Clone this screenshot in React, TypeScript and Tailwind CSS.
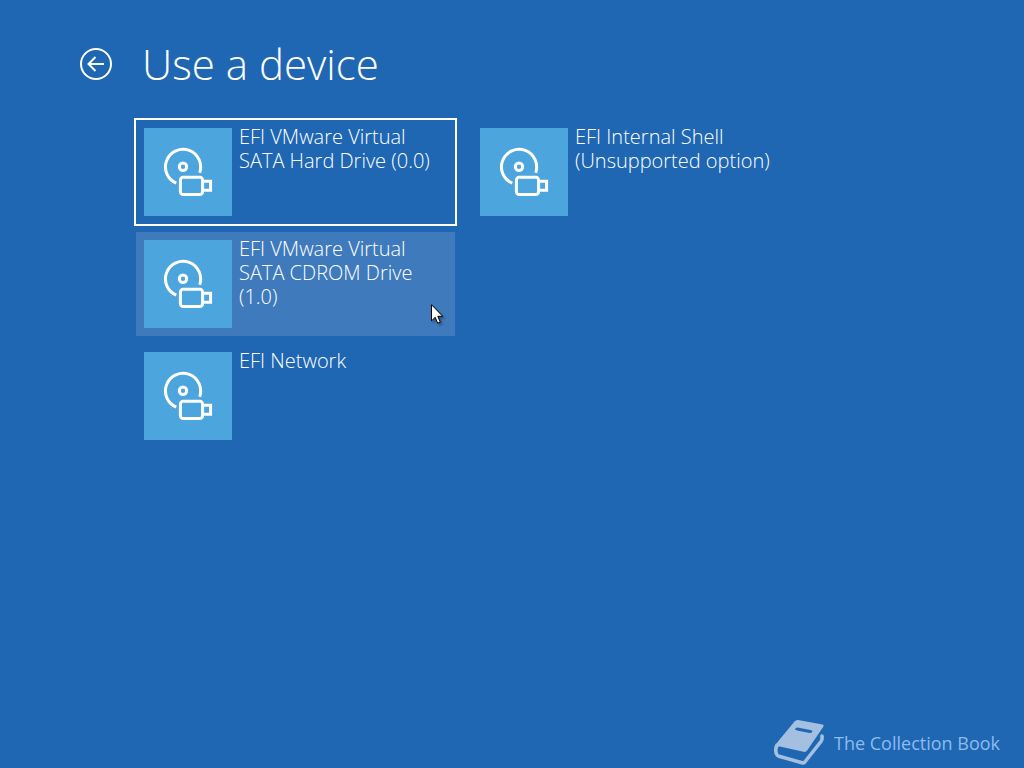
interface Device {
    name: string;
    state?: "focused" | "hovered";
}

const devices: Device[] = [
    { name: "EFI VMware Virtual SATA Hard Drive (0.0)", state: "focused" },
    { name: "EFI VMware Virtual SATA CDROM Drive (1.0)", state: "hovered" },
    { name: "EFI Network" },
    { name: "EFI Internal Shell (Unsupported option)" },
];

const stateClasses = {
    focused: "outline-2 outline-white",
    hovered: "bg-[#3f7bbc]",
};

function DeviceIcon() {
    return (
        <svg viewBox="0 0 88 88" className="size-22 shrink-0 bg-[#4ca5dc]" fill="none" stroke="white" strokeWidth="3" aria-hidden="true">
            <path d="M32.3 55.2A17.6 17.6 0 1 1 55.7 44.7" />
            <circle cx="39" cy="38.8" r="3.7" />
            <rect x="36.4" y="49.2" width="22.2" height="17.4" rx="2.8" />
            <path d="M59 53.3h7.6v9H59" />
        </svg>
    );
}

function Cursor() {
    return (
        <svg viewBox="0 0 12 20" className="absolute top-18 left-[295px] h-5 w-3 overflow-visible drop-shadow-[2px_2px_1px_rgba(0,0,0,0.3)]" aria-hidden="true">
            <path d="M.5.7v16.2l3.7-3.6 2.5 5.9 2.6-1.1-2.5-5.8h4.9z" fill="white" stroke="black" />
        </svg>
    );
}

function DeviceTile({ device }: { device: Device }) {
    return (
        <button
            type="button"
            className={`relative flex min-h-26 w-full items-start gap-[7px] p-2 text-left ${device.state ? stateClasses[device.state] : ""}`}
        >
            <DeviceIcon />
            <span className="-mt-[3px] max-w-52 text-[20px] leading-6">{device.name}</span>
            {device.state === "hovered" && <Cursor />}
        </button>
    );
}

function BookLogo() {
    return (
        <svg viewBox="0 0 50 47" className="h-[47px] w-[50px]" aria-hidden="true">
            {/* Cover with the title slot cut out */}
            <path
                fill="#a4c0e0"
                fillRule="evenodd"
                d="M24 1L48.500 5.500Q50.300 6 49.300 7.800L33.500 31Q32 33.300 29.500 32.800L6 27.500Q3 27 1.500 29 1 26 4 22.500L20.500 2.600Q22 .6 24 1zM23.500 8.500Q21 8.500 21.300 10.500 21.300 11.200 23 11.600L35.500 14Q38.300 14.300 38.400 12.300 38.500 11.300 36.500 11z"
            />
            {/* Spine and back cover */}
            <path
                fill="none"
                stroke="#a4c0e0"
                strokeWidth="3.600"
                strokeLinecap="round"
                strokeLinejoin="round"
                d="M3 26Q.8 31 2.500 35 3 36.500 5 37.300L28 43.700Q30 44.300 31.200 42.500L47 22.500Q48.500 20.500 48 17"
            />
        </svg>
    );
}

export default function App() {
    return (
        <div className="flex min-h-screen flex-col bg-[#1f67b3] font-['Open_Sans','Noto_Sans',sans-serif] font-light text-white">
            <header className="flex items-center gap-[30px] px-20 pt-9">
                <button type="button" aria-label="Back" className="size-8">
                    <svg viewBox="0 0 32 32" className="size-8" fill="none" stroke="white" strokeWidth="2" aria-hidden="true">
                        <circle cx="16" cy="16" r="15" />
                        <path d="M24 16H9M15.500 9L8.500 16l7 7" />
                    </svg>
                </button>
                <h1 className="text-[42px] leading-14">Use a device</h1>
            </header>

            <main className="px-34 pt-7">
                <ul className="grid grid-flow-col grid-cols-[319px_319px] grid-rows-3 gap-x-[17px] gap-y-2">
                    {devices.map((device) => (
                        <li key={device.name}>
                            <DeviceTile device={device} />
                        </li>
                    ))}
                </ul>
            </main>

            <footer className="mt-auto flex items-center justify-end gap-[10px] pr-6 pb-[2px] text-[#8dbbee]">
                <BookLogo />
                <span className="text-[18px] leading-6 font-normal">The Collection Book</span>
            </footer>
        </div>
    );
}
